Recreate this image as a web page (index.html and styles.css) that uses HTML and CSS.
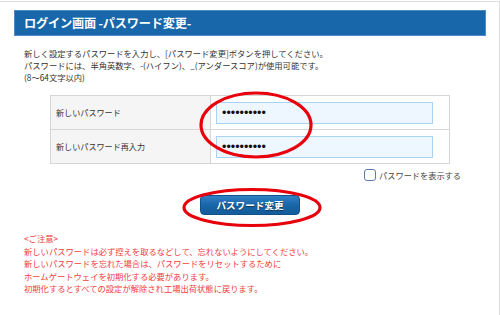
FILE: index.html
```html
<!DOCTYPE html>
<html lang="ja">
<head>
    <meta charset="UTF-8">
    <meta name="viewport" content="width=device-width, initial-scale=1.0">
    <title>ログイン画面 -パスワード変更-</title>
    <link rel="stylesheet" href="styles.css">
</head>
<body>

    <div class="page">
        <h1 class="title-bar">ログイン画面 -パスワード変更-</h1>

        <p class="intro">
            新しく設定するパスワードを入力し、[パスワード変更]ボタンを押してください。<br>
            パスワードには、半角英数字、-(ハイフン)、_(アンダースコア)が使用可能です。<br>
            (8～64文字以内)
        </p>

        <table class="pw-table">
            <tr>
                <th>新しいパスワード</th>
                <td><input type="password" class="pw-input" value="aaaaaaaaaa"></td>
            </tr>
            <tr>
                <th>新しいパスワード再入力</th>
                <td><input type="password" class="pw-input" value="aaaaaaaaaa"></td>
            </tr>
        </table>

        <div class="show-pw">
            <label><span class="check-box"></span>パスワードを表示する</label>
        </div>

        <div class="button-row">
            <button type="button" class="btn-change">パスワード変更</button>
        </div>

        <p class="notice">
            &lt;ご注意&gt;<br>
            新しいパスワードは必ず控えを取るなどして、忘れないようにしてください。<br>
            新しいパスワードを忘れた場合は、パスワードをリセットするために<br>
            ホームゲートウェイを初期化する必要があります。<br>
            初期化するとすべての設定が解除され工場出荷状態に戻ります。
        </p>
    </div>

    <!-- red annotation marks -->
    <svg class="marks" width="500" height="315" viewBox="0 0 500 315">
        <ellipse cx="256" cy="125" rx="55" ry="32" fill="none" stroke="#e8000b" stroke-width="3.2"/>
        <ellipse cx="252" cy="207.5" rx="68" ry="18" fill="none" stroke="#e8000b" stroke-width="3.2"/>
    </svg>

</body>
</html>
```

FILE: styles.css
```css
* {
    margin: 0;
    padding: 0;
    box-sizing: border-box;
}

body {
    font-family: "Noto Sans CJK JP", "Noto Sans", sans-serif;
    background-color: #fff;
    color: #333;
    width: 500px;
    height: 315px;
    overflow: hidden;
    position: relative;
}

.page {
    margin-top: 1px;
    height: 314px;
    border-top: 1px solid #dedede;
    border-right: 1px solid #dedede;
    padding: 8px 13px 0 14px;
}

.title-bar {
    height: 26px;
    background-color: #1767aa;
    border: 1px solid #4f8cc4;
    color: #fff;
    font-size: 12.2px;
    font-weight: bold;
    line-height: 24px;
    padding-left: 9px;
    letter-spacing: -0.2px;
}

.intro {
    margin-top: 11px;
    padding-left: 10px;
    font-size: 8.3px;
    line-height: 12px;
    color: #333;
}

.pw-table {
    width: 400px;
    margin: 12px auto 0;
    border-collapse: collapse;
    border: 1px solid #d6d6d6;
}

.pw-table th,
.pw-table td {
    height: 34px;
    border: 1px solid #d6d6d6;
}

.pw-table th {
    width: 160px;
    background-color: #f5f5f5;
    font-size: 8.1px;
    font-weight: normal;
    text-align: left;
    padding-left: 5px;
    color: #333;
}

.pw-table td {
    padding-left: 5px;
    background-color: #fff;
}

.pw-input {
    display: block;
    width: 217px;
    height: 22px;
    border: 1px solid #a8d4f4;
    background-color: #eef7ff;
    font-family: "Liberation Sans", sans-serif;
    font-size: 12.5px;
    color: #111;
    padding-left: 5px;
    outline: none;
}

.show-pw {
    display: flex;
    justify-content: flex-end;
    padding-right: 25px;
    margin-top: 5px;
}

.show-pw label {
    display: flex;
    align-items: center;
    font-size: 8.2px;
    color: #444;
    line-height: 12px;
}

.check-box {
    width: 12px;
    height: 12px;
    border: 1px solid #5b7ea6;
    border-radius: 3px;
    background-color: #fff;
    margin-right: 3px;
}

.button-row {
    display: flex;
    justify-content: center;
    margin-top: 14px;
}

.btn-change {
    width: 100px;
    height: 20px;
    border: 1px solid #10528a;
    border-radius: 4px;
    background: linear-gradient(#3080c4, #1764a6 55%, #145c9a);
    color: #fff;
    font-family: "Noto Sans CJK JP", sans-serif;
    font-size: 9.6px;
    font-weight: bold;
    text-shadow: 0 1px 1px rgba(0, 0, 0, 0.5);
    cursor: pointer;
}

.notice {
    margin-top: 17px;
    padding-left: 10px;
    font-size: 8.3px;
    line-height: 12.6px;
    color: #f2403c;
}

.marks {
    position: absolute;
    left: 0;
    top: 0;
    pointer-events: none;
}
```
